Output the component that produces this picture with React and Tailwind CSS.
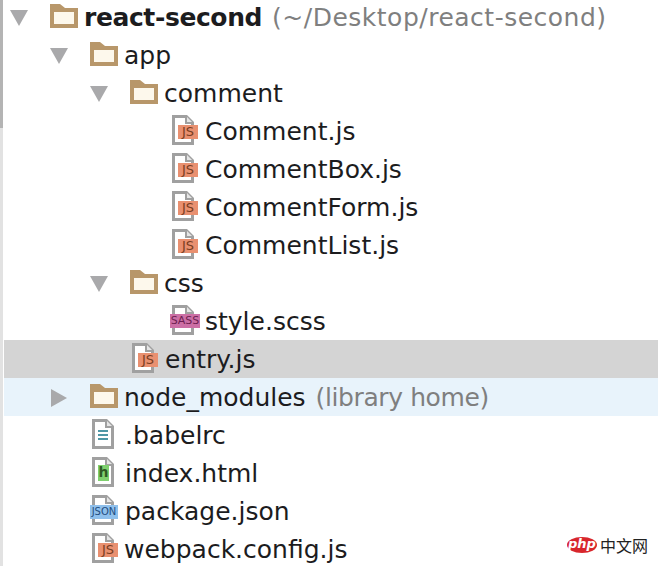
import React from 'react';

const Arrow = ({ open }) => (
  <svg width="18" height="18" viewBox="0 0 18 18" className="shrink-0 mt-[2px]">
    {open ? <path d="M0 1H18L9 17Z" fill="#a9a9ab" /> : <path d="M1 0L17 9L1 18Z" fill="#a9a9ab" />}
  </svg>
);

const Folder = () => (
  <svg width="28" height="24" viewBox="0 0 28 24" className="shrink-0 mb-[2px]">
    <path d="M0 0H10L15 4H28V24H0Z" fill="#b8976a" />
    <rect x="4" y="8" width="20" height="12" fill="#fdf8ec" />
  </svg>
);

const Sheet = ({ children }) => (
  <svg width="22" height="30" viewBox="0 0 22 30" className="absolute left-0 top-0">
    <path d="M0 0H15L22 7V30H0Z" fill="#a0a0a0" />
    <path d="M3 3H13V9H19V27H3Z" fill="#fff" />
    <path d="M15 2L20 7H15Z" fill="#e6e6e6" />
    {children}
  </svg>
);

const BadgeFile = ({ type }) => {
  if (type === 'js') {
    return (
      <span className="relative block w-[26px] h-[30px] shrink-0 mb-[3px]">
        <Sheet />
        <span className="absolute left-[6px] top-[10px] w-[20px] h-[14px] bg-[#e99070] text-[#7a3d22] text-[13px] leading-[14px] text-center">JS</span>
      </span>
    );
  }
  if (type === 'sass') {
    return (
      <span className="relative block w-[30px] h-[30px] shrink-0 mb-[3px]">
        <span className="absolute left-[2px] top-0"><Sheet /></span>
        <span className="absolute left-0 top-[9px] w-[30px] h-[14px] bg-[#cc6fa5] text-[#6e1f52] text-[11px] leading-[14px] text-center">SASS</span>
      </span>
    );
  }
  if (type === 'json') {
    return (
      <span className="relative block w-[28px] h-[30px] shrink-0 mb-[3px]">
        <span className="absolute left-[2px] top-0"><Sheet /></span>
        <span className="absolute left-0 top-[10px] w-[28px] h-[14px] bg-[#8fc0ec] text-[#1f4e80] text-[10px] leading-[14px] text-center">JSON</span>
      </span>
    );
  }
  if (type === 'html') {
    return (
      <span className="relative block w-[26px] h-[30px] shrink-0 mb-[3px]">
        <Sheet />
        <span className="absolute left-[6px] top-[8px] w-[11px] h-[16px] bg-[#7fd06e] text-[#2f5a24] text-[14px] leading-[15px] font-bold text-center">h</span>
      </span>
    );
  }
  return (
    <span className="relative block w-[26px] h-[30px] shrink-0 mb-[3px]">
      <Sheet>
        <rect x="6" y="11" width="10" height="2" fill="#4f97a6" />
        <rect x="6" y="15" width="10" height="2" fill="#4f97a6" />
        <rect x="6" y="19" width="10" height="2" fill="#4f97a6" />
      </Sheet>
    </span>
  );
};

const rows = [
  { kind: 'folder', depth: 0, name: 'react-second', note: '(~/Desktop/react-second)', bold: true, open: true, track: 'tracking-[-0.4px]', noteTrack: 'tracking-[0.5px]' },
  { kind: 'folder', depth: 1, name: 'app', open: true },
  { kind: 'folder', depth: 2, name: 'comment', open: true },
  { kind: 'file', pad: 168, type: 'js', name: 'Comment.js' },
  { kind: 'file', pad: 168, type: 'js', name: 'CommentBox.js' },
  { kind: 'file', pad: 168, type: 'js', name: 'CommentForm.js' },
  { kind: 'file', pad: 168, type: 'js', name: 'CommentList.js' },
  { kind: 'folder', depth: 2, name: 'css', open: true },
  { kind: 'file', pad: 166, type: 'sass', name: 'style.scss', gap: 'mr-[5px]' },
  { kind: 'file', pad: 128, type: 'js', name: 'entry.js', selected: true },
  { kind: 'folder', depth: 1, name: 'node_modules', note: '(library home)', open: false, hover: true, noteTrack: 'tracking-[-0.4px]' },
  { kind: 'file', pad: 88, type: 'text', name: '.babelrc' },
  { kind: 'file', pad: 88, type: 'html', name: 'index.html' },
  { kind: 'file', pad: 86, type: 'json', name: 'package.json' },
  { kind: 'file', pad: 88, type: 'js', name: 'webpack.config.js', gap: 'mr-[6px]' },
];

const Row = ({ row }) => {
  const bg = row.selected ? 'bg-[#d4d4d4]' : row.hover ? 'bg-[#e8f3fb]' : 'bg-white';
  const pad = row.kind === 'folder' ? 6 + row.depth * 40 : row.pad;
  return (
    <div className={`flex items-center h-[38px] ${bg}`} style={{ paddingLeft: pad }}>
      {row.kind === 'folder' ? (
        <>
          <span className="flex w-[40px] shrink-0"><Arrow open={row.open} /></span>
          <span className="flex mr-[6px]"><Folder /></span>
        </>
      ) : (
        <span className={row.gap || 'mr-[7px]'}><BadgeFile type={row.type} /></span>
      )}
      <span className={`whitespace-nowrap pt-[2px] text-[25px] text-[#1c1c1e] ${row.bold ? 'font-bold' : ''} ${row.track || ''}`}>{row.name}</span>
      {row.note && <span className={`ml-[10px] whitespace-nowrap pt-[2px] text-[25px] text-[#7f7f7f] ${row.noteTrack || ''}`}>{row.note}</span>}
    </div>
  );
};

export default function App() {
  return (
    <div className="relative w-[658px] h-[566px] overflow-hidden bg-white font-['DejaVu_Sans',sans-serif]">
      <div className="flex h-full">
        <div className="w-[4px] shrink-0 flex flex-col pr-[1px]">
          <div className="h-[128px] bg-[#b4b4b4]" />
          <div className="flex-1 bg-[#e2e2e2]" />
        </div>
        <div className="flex-1 min-w-0 -mt-[2px]">
          {rows.map((row) => (
            <Row key={row.name} row={row} />
          ))}
        </div>
      </div>
      {/* watermark over the bottom right corner */}
      <div className="absolute left-[567px] top-[537px] flex items-center gap-[3px]">
        <span className="w-[30px] h-[16px] rounded-[50%] bg-[#d8262c] text-white text-[13px] leading-[14px] italic font-bold text-center">php</span>
        <span className="text-[16px] leading-[16px] text-[#222] font-['Noto_Sans_CJK_SC',sans-serif]">中文网</span>
      </div>
    </div>
  );
}
